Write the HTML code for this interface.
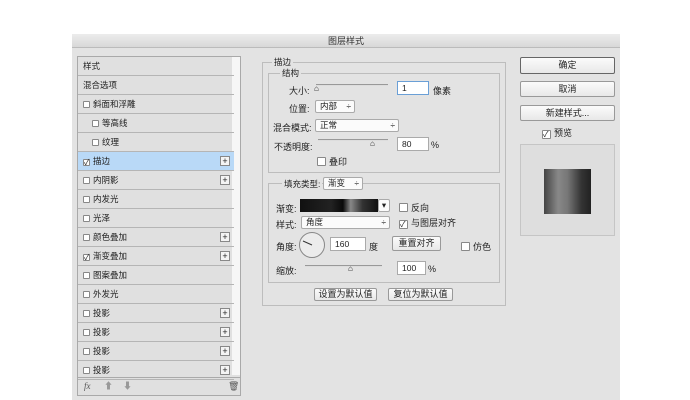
<!DOCTYPE html>
<html><head><meta charset="utf-8"><style>
*{margin:0;padding:0;box-sizing:border-box}
body{width:690px;height:400px;background:#fff;font-family:"Liberation Sans","Noto Sans CJK SC",sans-serif;font-size:9px;color:#222;position:relative;overflow:hidden}
.a{position:absolute}
.dlg{left:72px;top:34px;width:548px;height:366px;background:#e3e3e3}
.title{left:72px;top:34px;width:548px;height:14px;background:linear-gradient(#ececec,#d8d8d8);text-align:center;line-height:14px;font-size:9px;color:#333;border-bottom:1px solid #bbb}
.list{left:77px;top:56px;width:164px;height:340px;border:1px solid #a9a9a9;background:#e0e0e0}
.row{position:absolute;left:0;width:156px;height:19px;border-bottom:1px solid #b5b5b5;line-height:18px;padding-left:5px;font-size:8.5px}
.sel{background:#b9d9f7}
.cb{display:inline-block;width:7px;height:7px;border:1px solid #888;background:#fff;vertical-align:-1px;margin-right:3px;border-radius:1px;font-size:8px;line-height:6px}
.plus{position:absolute;left:142px;top:4px;width:10px;height:10px;border:1px solid #888;background:#f4f4f4;font-size:9px;line-height:8px;text-align:center}
.scroll{left:232px;top:57px;width:8px;height:318px;background:#f6f6f6}
.grp{border:1px solid #bdbdbd}
.lbl{background:#e3e3e3;padding:0 2px;font-size:8.5px}
.in{background:#fff;border:1px solid #aaa;height:14px;font-size:8.5px;line-height:12px;padding-left:4px}
.sel2{background:#fbfbfb;border:1px solid #aaa;height:13px;font-size:8.5px;line-height:11px;padding-left:4px;border-radius:2px}
.btn{background:linear-gradient(#fbfbfb,#e8e8e8);border:1px solid #999;text-align:center;font-size:9px;border-radius:2px}
.track{height:2px;background:#999;border-bottom:1px solid #ddd}
</style></head><body>
<div class="a dlg"></div>
<div class="a title">图层样式</div>
<div class="a list"></div>
<div class="a scroll"></div>
<div class="a" style="left:78px;top:57px;width:156px">
<div class="row" style="top:0">样式</div>
<div class="row" style="top:19px">混合选项</div>
<div class="row" style="top:38px"><span class="cb"></span>斜面和浮雕</div>
<div class="row" style="top:57px;padding-left:14px"><span class="cb"></span>等高线</div>
<div class="row" style="top:76px;padding-left:14px"><span class="cb"></span>纹理</div>
<div class="row sel" style="top:95px"><span class="cb">✓</span>描边<span class="plus">+</span></div>
<div class="row" style="top:114px"><span class="cb"></span>内阴影<span class="plus">+</span></div>
<div class="row" style="top:133px"><span class="cb"></span>内发光</div>
<div class="row" style="top:152px"><span class="cb"></span>光泽</div>
<div class="row" style="top:171px"><span class="cb"></span>颜色叠加<span class="plus">+</span></div>
<div class="row" style="top:190px"><span class="cb">✓</span>渐变叠加<span class="plus">+</span></div>
<div class="row" style="top:209px"><span class="cb"></span>图案叠加</div>
<div class="row" style="top:228px"><span class="cb"></span>外发光</div>
<div class="row" style="top:247px"><span class="cb"></span>投影<span class="plus">+</span></div>
<div class="row" style="top:266px"><span class="cb"></span>投影<span class="plus">+</span></div>
<div class="row" style="top:285px"><span class="cb"></span>投影<span class="plus">+</span></div>
<div class="row" style="top:304px"><span class="cb"></span>投影<span class="plus">+</span></div>
</div>
<div class="a" style="left:78px;top:377px;width:162px;height:18px;border-top:1px solid #aaa;font-size:9px;line-height:17px;color:#555">
<span style="position:absolute;left:6px;font-style:italic;font-family:'Liberation Serif',serif">fx</span>
<span style="position:absolute;left:26px;color:#999">⬆</span>
<span style="position:absolute;left:45px;color:#999">⬇</span>
<span style="position:absolute;left:150px">🗑</span></div>

<div class="a grp" style="left:262px;top:62px;width:244px;height:244px"></div>
<div class="a lbl" style="left:272px;top:56px">描边</div>
<div class="a grp" style="left:268px;top:73px;width:232px;height:100px"></div>
<div class="a lbl" style="left:280px;top:67px">结构</div>
<div class="a" style="left:289px;top:84px">大小:</div>
<div class="a track" style="left:316px;top:84px;width:72px"></div>
<div class="a" style="left:314px;top:84px;font-size:8px">⌂</div>
<div class="a in" style="left:397px;top:81px;width:32px;border-color:#6a9fd6">1</div>
<div class="a" style="left:433px;top:84px">像素</div>
<div class="a" style="left:289px;top:102px">位置:</div>
<div class="a sel2" style="left:315px;top:100px;width:40px">内部 <span style="float:right;margin-right:3px">÷</span></div>
<div class="a" style="left:273px;top:121px">混合模式:</div>
<div class="a sel2" style="left:315px;top:119px;width:84px">正常<span style="float:right;margin-right:3px">÷</span></div>
<div class="a" style="left:274px;top:140px">不透明度:</div>
<div class="a track" style="left:318px;top:139px;width:70px"></div>
<div class="a" style="left:370px;top:139px;font-size:8px">⌂</div>
<div class="a in" style="left:397px;top:137px;width:32px">80</div>
<div class="a" style="left:431px;top:140px">%</div>
<div class="a" style="left:317px;top:155px"><span class="cb" style="width:9px;height:9px"></span>叠印</div>

<div class="a grp" style="left:268px;top:183px;width:232px;height:100px"></div>
<div class="a lbl" style="left:282px;top:178px">填充类型:</div>
<div class="a sel2" style="left:323px;top:177px;width:40px">渐变 <span style="float:right;margin-right:3px">÷</span></div>
<div class="a" style="left:276px;top:202px">渐变:</div>
<div class="a" style="left:300px;top:199px;width:78px;height:13px;background:linear-gradient(90deg,#111,#222 40%,#0a0a0a 55%,#888 65%,#333 80%,#111)"></div>
<div class="a sel2" style="left:378px;top:199px;width:12px;padding:0;text-align:center">▾</div>
<div class="a" style="left:399px;top:201px"><span class="cb" style="width:9px;height:9px"></span>反向</div>
<div class="a" style="left:276px;top:218px">样式:</div>
<div class="a sel2" style="left:301px;top:216px;width:89px">角度<span style="float:right;margin-right:3px">÷</span></div>
<div class="a" style="left:399px;top:216px"><span class="cb" style="width:9px;height:9px;line-height:8px">✓</span>与图层对齐</div>
<div class="a" style="left:276px;top:240px">角度:</div>
<div class="a" style="left:299px;top:232px;width:26px;height:26px;border:1px solid #888;border-radius:50%;background:#ececec"></div>
<svg class="a" style="left:299px;top:232px" width="26" height="26"><line x1="4" y1="9" x2="13" y2="13" stroke="#333" stroke-width="1"/></svg>
<div class="a in" style="left:330px;top:237px;width:36px">160</div>
<div class="a" style="left:369px;top:240px">度</div>
<div class="a btn" style="left:392px;top:236px;width:49px;height:15px;line-height:13px">重置对齐</div>
<div class="a" style="left:461px;top:240px"><span class="cb" style="width:9px;height:9px"></span>仿色</div>
<div class="a" style="left:276px;top:264px">缩放:</div>
<div class="a track" style="left:305px;top:265px;width:77px"></div>
<div class="a" style="left:348px;top:264px;font-size:8px">⌂</div>
<div class="a in" style="left:397px;top:261px;width:29px">100</div>
<div class="a" style="left:428px;top:264px">%</div>
<div class="a btn" style="left:314px;top:288px;width:63px;height:13px;line-height:11px">设置为默认值</div>
<div class="a btn" style="left:388px;top:288px;width:65px;height:13px;line-height:11px">复位为默认值</div>

<div class="a btn" style="left:520px;top:57px;width:95px;height:17px;line-height:15px;border-color:#666">确定</div>
<div class="a btn" style="left:520px;top:81px;width:95px;height:16px;line-height:14px">取消</div>
<div class="a btn" style="left:520px;top:105px;width:95px;height:16px;line-height:14px">新建样式...</div>
<div class="a" style="left:542px;top:126px"><span class="cb" style="width:9px;height:9px;line-height:8px">✓</span>预览</div>
<div class="a" style="left:520px;top:144px;width:95px;height:92px;border:1px solid #c5c5c5;background:#dedede"></div>
<div class="a" style="left:544px;top:169px;width:47px;height:45px;background:linear-gradient(90deg,#444,#888 30%,#777 50%,#333 80%,#222)"></div>
</body></html>
